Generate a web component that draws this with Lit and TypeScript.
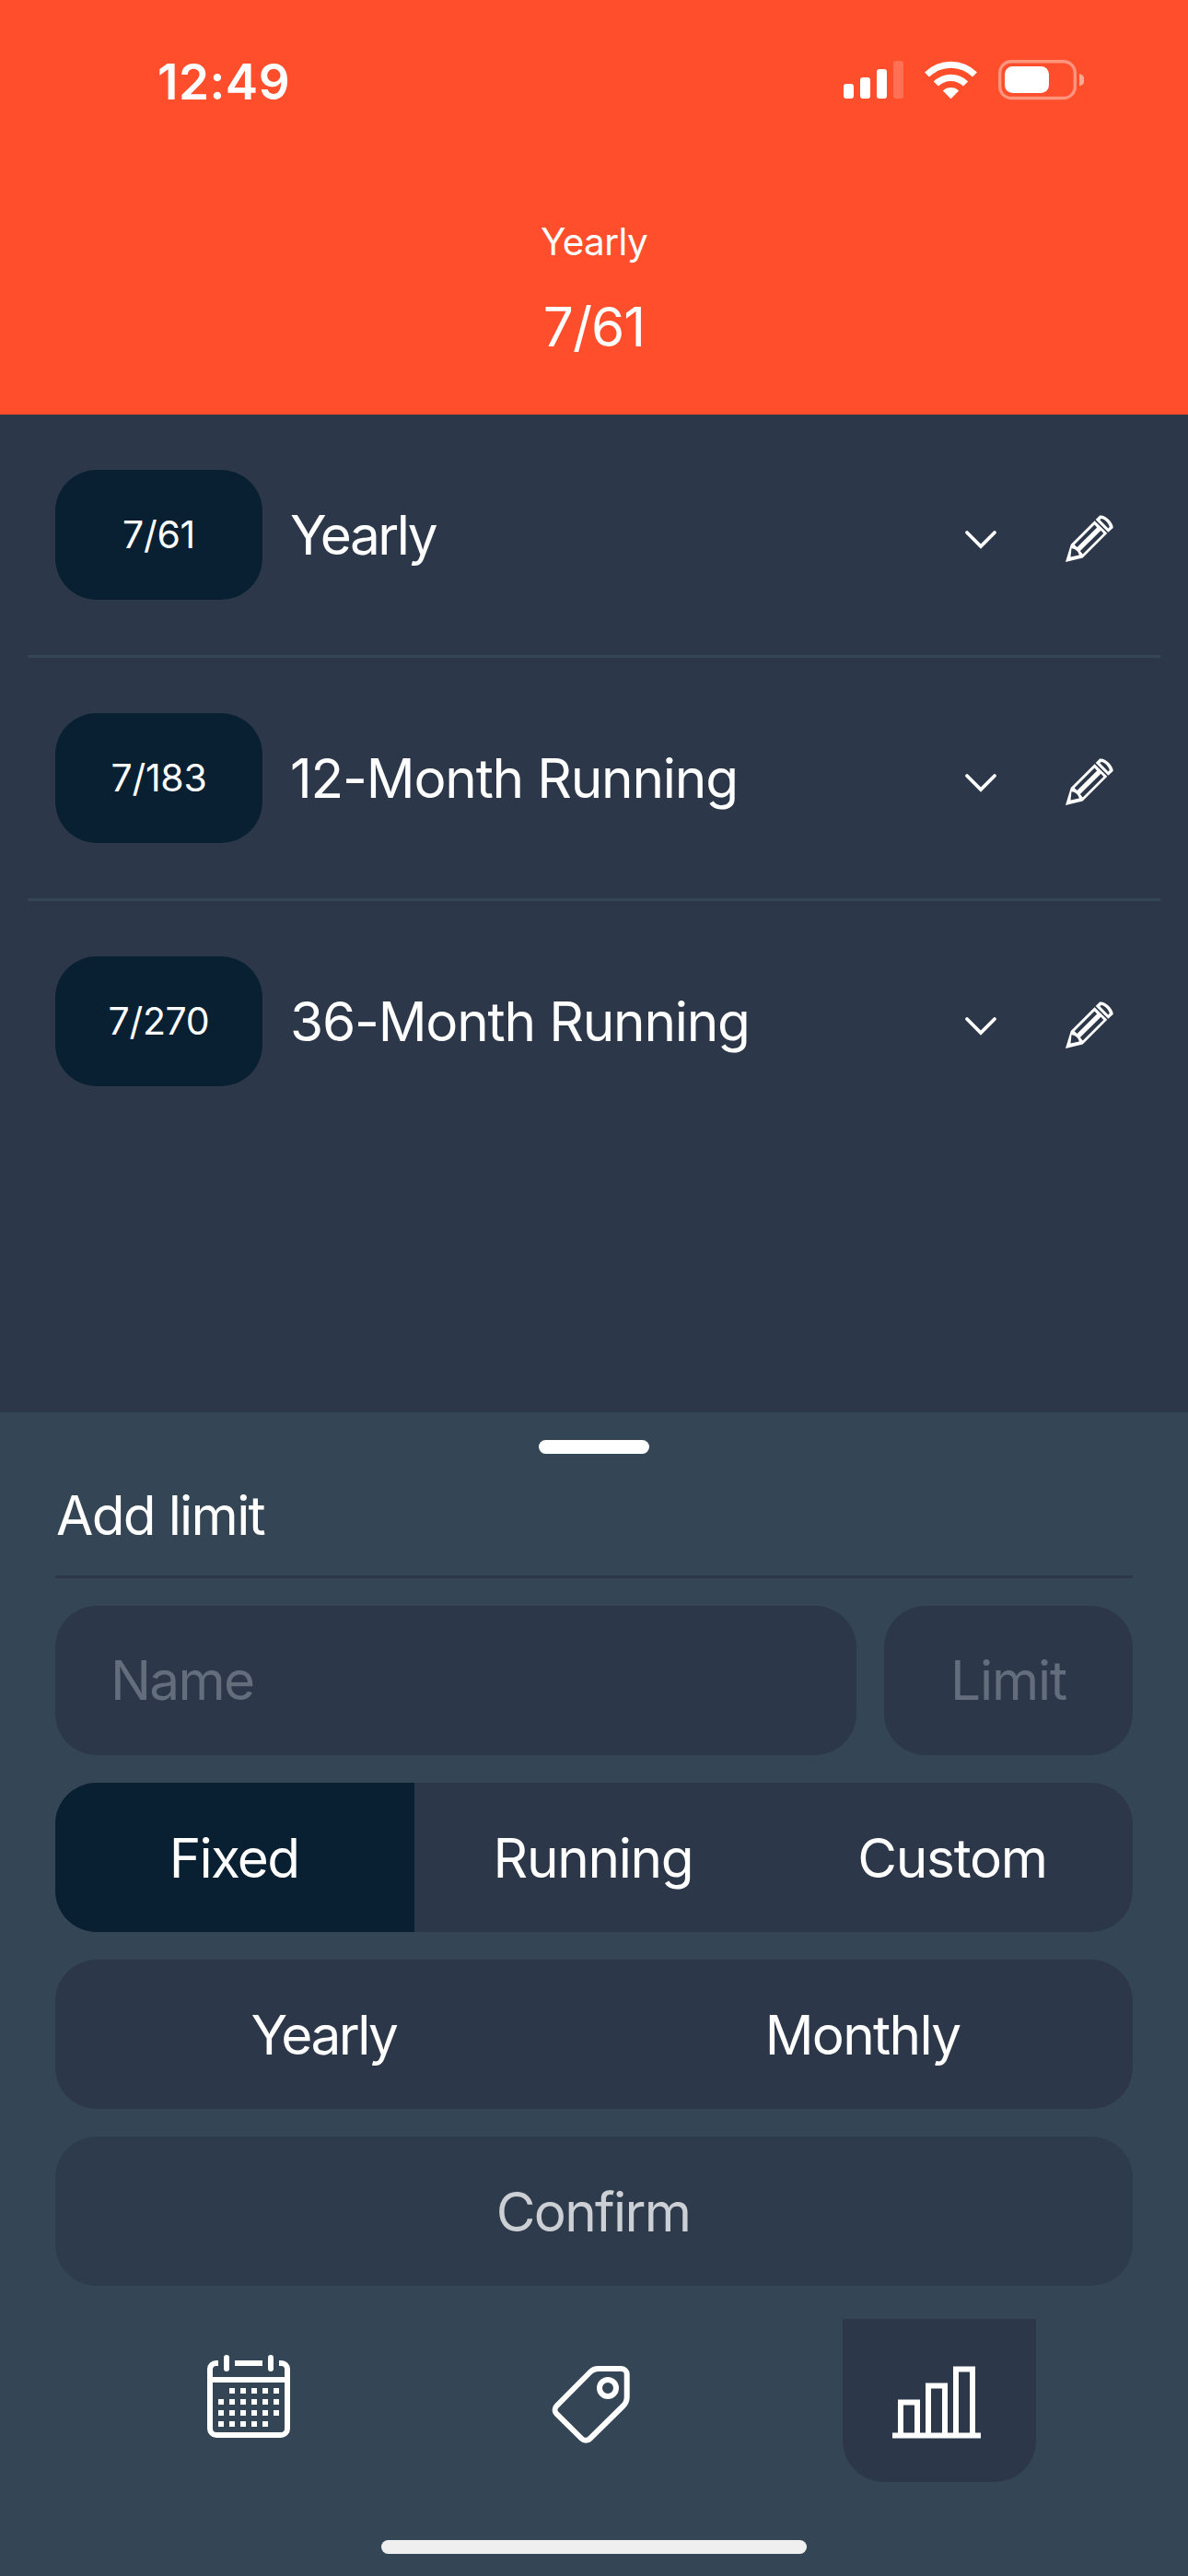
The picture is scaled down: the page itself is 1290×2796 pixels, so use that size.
import { LitElement, html, svg, css } from "lit";
import { customElement, property, state } from "lit/decorators.js";
import { classMap } from "lit/directives/class-map.js";

interface Limit {
  used: string;
  name: string;
}

const LIMITS: Limit[] = [
  { used: "7/61", name: "Yearly" },
  { used: "7/183", name: "12-Month Running" },
  { used: "7/270", name: "36-Month Running" },
];

@customElement("status-bar")
class StatusBar extends LitElement {
  static styles = css`
    :host {
      display: flex;
      align-items: center;
      justify-content: space-between;
      height: 175px;
      padding: 0 113px 0 171px;
      box-sizing: border-box;
    }
    .time {
      padding-top: 2px;
      font-size: 53px;
      font-weight: 600;
      line-height: 60px;
      letter-spacing: 0.5px;
    }
    .icons {
      display: block;
      width: 262px;
      height: 45px;
    }
  `;
  render() {
    return html`
      <span class="time">12:49</span>
      <svg class="icons" viewBox="915 65 262 45" fill="#fff">
        <rect x="916" y="91" width="11" height="16" rx="3" />
        <rect x="934" y="84" width="11" height="23" rx="3" />
        <rect x="952" y="75" width="11" height="32" rx="3" />
        <rect x="970" y="66" width="11" height="41" rx="3" opacity=".2" />
        <path d="M1004 78.5A40.6 40.6 0 0 1 1061 78.5L1056 83.5A33.5 33.5 0 0 0 1009 83.5Z" />
        <path d="M1013.8 88.5A26.6 26.6 0 0 1 1051.2 88.5L1046 93.6A19.3 19.3 0 0 0 1019 93.6Z" />
        <path d="M1023.8 98.4A12.8 12.8 0 0 1 1041.2 98.4L1032.5 107.2Z" />
        <rect x="1085.7" y="66.7" width="81.6" height="39.8" rx="12.5" fill="none" stroke="#fff" stroke-width="3.4" opacity=".4" />
        <rect x="1091" y="72" width="48" height="29" rx="8.5" />
        <path d="M1172 80a6.8 6.8 0 0 1 0 13.4z" opacity=".5" />
      </svg>
    `;
  }
}

@customElement("limit-row")
class LimitRow extends LitElement {
  @property() used = "";
  @property() name = "";

  static styles = css`
    :host {
      display: flex;
      align-items: center;
      padding: 60px 51px 60px 30px;
      margin: 0 30px;
    }
    .badge {
      display: grid;
      place-items: center;
      width: 225px;
      height: 141px;
      padding-bottom: 1px;
      box-sizing: border-box;
      border-radius: 45px;
      background: #092033;
      font-size: 41px;
      letter-spacing: -0.3px;
    }
    .name {
      flex: 1;
      padding-left: 30px;
      font-size: 58.5px;
      letter-spacing: -1.2px;
    }
    .name.short {
      letter-spacing: -2.5px;
    }
    .chevron {
      width: 36px;
      height: 22px;
      margin: 8px 73px 0 0;
    }
    .pencil {
      width: 53px;
      height: 53px;
      margin-top: 8px;
    }
  `;
  render() {
    return html`
      <span class="badge">${this.used}</span>
      <span class=${classMap({ name: true, short: this.name.length < 8 })}>${this.name}</span>
      <svg class="chevron" viewBox="0 0 36 22">
        <path d="M3 4 18 19 33 4" fill="none" stroke="#fff" stroke-width="3.8" stroke-linecap="round" />
      </svg>
      <svg class="pencil" viewBox="0 0 53 53" fill="#fff" fill-rule="evenodd">
        <path d="M1 52 6.8 33 32.6 7.3 46.3 20.8 19.6 47.6ZM7.5 37.2 6.5 46.5 15.8 44.6C15.4 41 12 37.5 7.5 37.2ZM10.7 33.3 13.6 36 35.2 14.4 32.5 11.5ZM16.9 40 19.7 43.6 42.3 20.9 39.4 17.8Z" />
        <path d="M33.7 6 38.2 1.5C44 .5 52.5 8.5 52.8 14.7L47.4 19.7ZM38.3 6.2 47.4 15.4 48.8 14C48.3 10.3 43.7 5.2 39.7 4.9Z" />
      </svg>
    `;
  }
}

const calendarDots = [
  [0, 1, 1, 1, 1, 1],
  [1, 1, 1, 1, 1, 1],
  [1, 1, 1, 1, 1, 1],
  [1, 1, 1, 1, 1, 0],
];

const calendarIcon = html`
  <svg class="icon" viewBox="0 0 90 90" fill="none" stroke="#fff" stroke-width="6">
    <path d="M12 9H9.5A6.5 6.5 0 0 0 3 15.5V80A7 7 0 0 0 10 87H80A7 7 0 0 0 87 80V15.5A6.5 6.5 0 0 0 80.5 9H78M30 9H60M3 27H87" />
    <path d="M21 3V15M69 3V15" stroke-linecap="round" />
    ${calendarDots.map((row, r) =>
      row.map((on, c) =>
        on ? svg`<rect x=${12 + c * 12} y=${36 + r * 12} width="6" height="6" fill="#fff" stroke="none" />` : null
      )
    )}
  </svg>
`;

const tagIcon = html`
  <svg class="icon" viewBox="0 0 90 90" fill="none" stroke="#fff" stroke-width="6">
    <path d="M49.5 15H74.7A6 6 0 0 1 80.7 21V46Q80.7 51.5 76.5 55.5L40.5 91A6.2 6.2 0 0 1 31.7 91L4.3 64A6.2 6.2 0 0 1 4.3 55.5L41 18.5Q44.5 15 49.5 15Z" />
    <circle cx="60" cy="36" r="9" />
  </svg>
`;

const barsIcon = html`
  <svg class="icon bars" viewBox="0 0 96 79" fill="none" stroke="#fff" stroke-width="6">
    <path d="M0 75.5H96M9 73V39.5H27V73M39 73V21.5H57V73M69 73V3.5H87V73" />
  </svg>
`;

@customElement("app-root")
class AppRoot extends LitElement {
  @state() private kind = "Fixed";

  static styles = css`
    :host {
      display: flex;
      flex-direction: column;
      width: 1290px;
      height: 2796px;
      background: #2c384a;
      color: #fff;
      font-family: Inter, "Liberation Sans", sans-serif;
      font-weight: 400;
      overflow: hidden;
    }
    .header {
      height: 450px;
      background: #ff4e2b;
      text-align: center;
    }
    .header-name {
      margin-top: 58px;
      font-size: 40.5px;
      line-height: 60px;
      letter-spacing: -0.6px;
    }
    .header-count {
      margin-top: 22px;
      font-size: 58.5px;
      line-height: 80px;
      letter-spacing: -1px;
    }
    .list {
      flex: 1;
    }
    .divider {
      height: 3px;
      margin: 0 30px;
      background: #344655;
    }
    .sheet {
      display: flex;
      flex-direction: column;
      height: 1263px;
      box-sizing: border-box;
      padding-top: 30px;
      background: #344655;
      font-size: 58.5px;
      letter-spacing: -1.7px;
    }
    .handle {
      align-self: center;
      width: 120px;
      height: 15px;
      border-radius: 7.5px;
      background: #fff;
    }
    .title {
      margin: 27px 60px 0;
      padding-left: 1px;
      height: 105px;
      line-height: 80px;
      border-bottom: 3px solid #2c384a;
    }
    .form {
      display: flex;
      flex-direction: column;
      gap: 30px;
      padding: 30px 60px 36px;
    }
    .fields {
      display: grid;
      grid-template-columns: 870px 270px;
      gap: 30px;
    }
    .box {
      display: flex;
      height: 162px;
      box-sizing: border-box;
      border-radius: 45px;
      background: #2c384a;
      overflow: hidden;
    }
    .field {
      align-items: center;
      padding: 0 0 2px 60px;
      color: #636d7c;
    }
    .field.short {
      padding-left: 0;
      justify-content: center;
      letter-spacing: -1.2px;
    }
    .option {
      flex: 1;
      display: grid;
      place-items: center;
      padding-right: 2px;
    }
    .option.selected {
      background: #092033;
    }
    .option.wide {
      letter-spacing: -1.3px;
    }
    .option.tight {
      letter-spacing: -2.5px;
    }
    .disabled {
      opacity: 0.75;
    }
    .nav {
      display: flex;
      justify-content: space-evenly;
    }
    .tab {
      display: grid;
      place-items: center;
      width: 210px;
      height: 177px;
      border-radius: 0 0 45px 45px;
    }
    .tab.active {
      background: #2c384a;
    }
    .icon {
      width: 90px;
      height: 90px;
      margin-bottom: 9px;
      overflow: visible;
    }
    .bars {
      width: 96px;
      height: 79px;
      margin: 3px 6px 0 0;
    }
    .home {
      align-self: center;
      width: 462px;
      height: 15px;
      margin-top: 63px;
      border-radius: 7.5px;
      background: #efefef;
    }
  `;

  render() {
    return html`
      <div class="header">
        <status-bar></status-bar>
        <div class="header-name">Yearly</div>
        <div class="header-count">7/61</div>
      </div>
      <div class="list">
        ${LIMITS.map(
          (l, i) => html`
            ${i ? html`<div class="divider"></div>` : null}
            <limit-row .used=${l.used} .name=${l.name}></limit-row>
          `
        )}
      </div>
      <div class="sheet">
        <div class="handle"></div>
        <div class="title">Add limit</div>
        <div class="form">
          <div class="fields">
            <div class="box field">Name</div>
            <div class="box field short">Limit</div>
          </div>
          <div class="box">
            ${["Fixed", "Running", "Custom"].map(
              (k) => html`<span
                class=${classMap({ option: true, wide: k !== "Fixed", selected: k === this.kind })}
                @click=${() => (this.kind = k)}
                >${k}</span
              >`
            )}
          </div>
          <div class="box">
            <span class="option tight">Yearly</span>
            <span class="option">Monthly</span>
          </div>
          <div class="box disabled"><span class="option">Confirm</span></div>
        </div>
        <div class="nav">
          <div class="tab">${calendarIcon}</div>
          <div class="tab">${tagIcon}</div>
          <div class="tab active">${barsIcon}</div>
        </div>
        <div class="home"></div>
      </div>
    `;
  }
}
